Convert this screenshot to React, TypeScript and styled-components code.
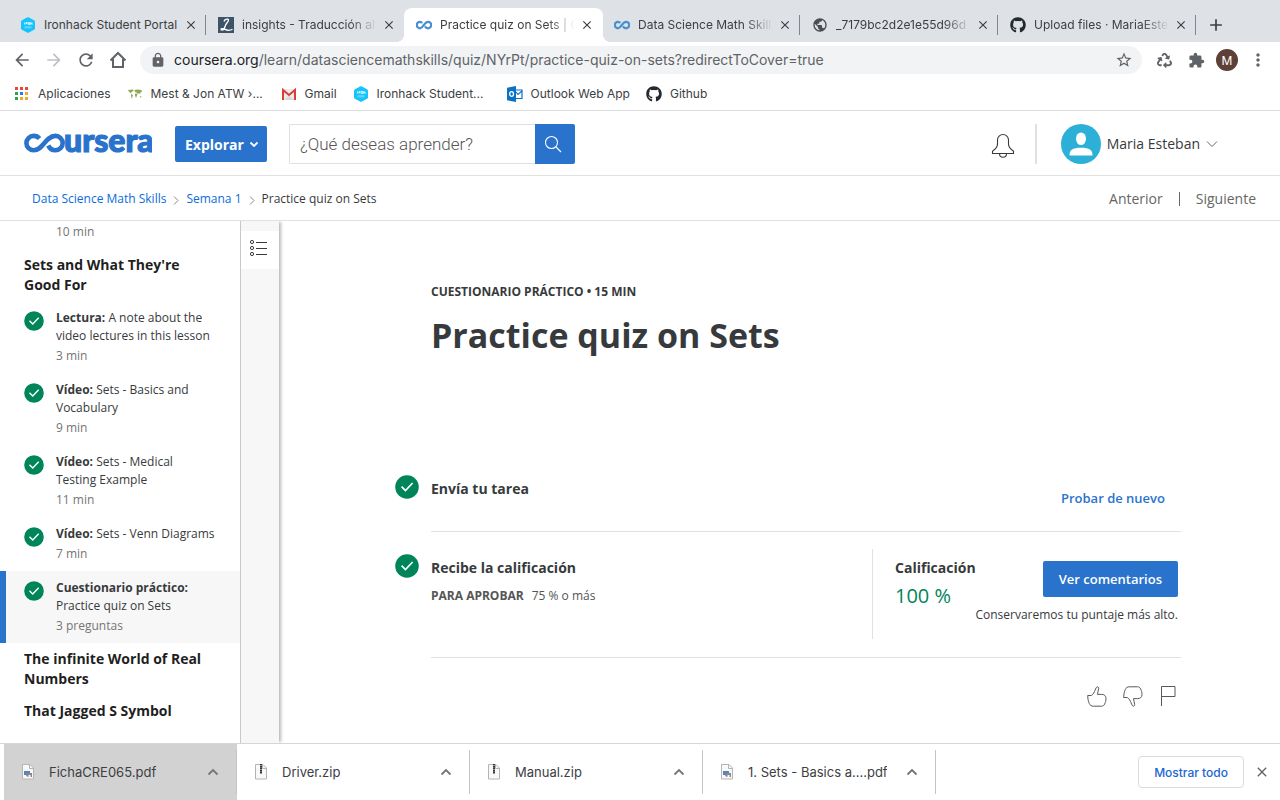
import React from "react";
import styled, { createGlobalStyle, css } from "styled-components";
import { FaGithub, FaRecycle } from "react-icons/fa";
import {
  MdAdd,
  MdArrowBack,
  MdArrowForward,
  MdClose,
  MdExtension,
  MdLock,
  MdMoreVert,
  MdPublic,
  MdRefresh,
  MdStarBorder,
} from "react-icons/md";

const GlobalStyle = createGlobalStyle`
  *, *::before, *::after { box-sizing: border-box; }
  body { margin: 0; background: #fff; font-family: "Open Sans", "Noto Sans", sans-serif; color: #373a3c; }
  button, input { font-family: inherit; }
  a { text-decoration: none; color: inherit; }
  h1, h2, h3, p, ul { margin: 0; padding: 0; }
  ul { list-style: none; }
  svg { display: block; flex: none; }
`;

const ui = css`
  font-family: Inter, Roboto, sans-serif;
`;

const Window = styled.div`
  display: flex;
  flex-direction: column;
  height: 100vh;
  min-height: 600px;
  overflow: hidden;
`;

/* ---------- browser chrome ---------- */

const TabStrip = styled.div`
  ${ui}
  display: flex;
  align-items: stretch;
  height: 42px;
  flex: none;
  padding: 8px 8px 0;
  background: #dee1e6;
`;

const Tab = styled.div<{ $active?: boolean; $line?: boolean }>`
  position: relative;
  display: flex;
  align-items: center;
  gap: 8px;
  flex: 0 1 198px;
  min-width: 0;
  padding: 0 7px 0 12px;
  font-size: 12px;
  line-height: 16px;
  color: #3c4043;
  ${(p) => p.$line && css`
    &::after {
      content: "";
      position: absolute;
      right: 0;
      top: 7px;
      width: 1px;
      height: 20px;
      background: #80868b;
    }
  `}
  ${(p) => p.$active && css`
    z-index: 1;
    &::before {
      content: "";
      position: absolute;
      z-index: -1;
      inset: 0 -1px 0 0;
      border-radius: 8px 8px 0 0;
      background: #fff;
    }
    &::after {
      content: "";
      position: absolute;
      z-index: -1;
      bottom: 0;
      left: -8px;
      right: -9px;
      height: 8px;
      background:
        radial-gradient(circle at 0 0, transparent 8px, #fff 8px) left / 8px 8px no-repeat,
        radial-gradient(circle at 100% 0, transparent 8px, #fff 8px) right / 8px 8px no-repeat;
    }
  `}
`;

const TabTitle = styled.span<{ $fade?: boolean }>`
  flex: 1;
  min-width: 0;
  margin-right: -4px;
  overflow: hidden;
  white-space: nowrap;
  ${(p) => p.$fade && css`
    mask-image: linear-gradient(to right, #000 80%, transparent);
  `}
`;

const IconButton = styled.button<{ $size?: number; $color?: string }>`
  display: flex;
  align-items: center;
  justify-content: center;
  flex: none;
  width: ${(p) => p.$size ?? 24}px;
  height: ${(p) => p.$size ?? 24}px;
  padding: 0;
  border: 0;
  background: none;
  color: ${(p) => p.$color ?? "#5f6368"};
`;

const NewTab = styled(IconButton)`
  align-self: center;
  margin-left: 8px;
`;

const Toolbar = styled.div`
  ${ui}
  display: flex;
  align-items: center;
  gap: 8px;
  flex: none;
  height: 36px;
  padding: 0 10px;
`;

const AddressBar = styled.div`
  display: flex;
  align-items: center;
  gap: 8px;
  flex: 1;
  min-width: 0;
  height: 28px;
  margin: 0 2px;
  padding: 0 6px 0 10px;
  border-radius: 14px;
  background: #f1f3f4;
  color: #5f6368;
`;

const Address = styled.span`
  flex: 1;
  overflow: hidden;
  white-space: nowrap;
  font-size: 14px;
  line-height: 20px;
  b { font-weight: 400; color: #202124; }
`;

const Profile = styled.button`
  width: 22px;
  height: 22px;
  padding: 0;
  border: 0;
  border-radius: 50%;
  background: #5d4037;
  color: #fff;
  font-size: 12px;
`;

const Bookmarks = styled.nav`
  ${ui}
  display: flex;
  align-items: center;
  gap: 16px;
  flex: none;
  height: 33px;
  padding: 0 14px;
  border-bottom: 1px solid #dadce0;
`;

const Bookmark = styled.a<{ $long?: boolean }>`
  display: flex;
  align-items: center;
  gap: 8px;
  width: ${(p) => (p.$long ? "138px" : "auto")};
  font-size: 12px;
  line-height: 16px;
  color: #3c4043;
  white-space: nowrap;
`;

/* ---------- coursera header ---------- */

const Header = styled.header`
  display: flex;
  align-items: center;
  flex: none;
  height: 65px;
  padding: 2px 24px 0;
  border-bottom: 1px solid #e1e1e1;
`;

const Explore = styled.button`
  display: flex;
  align-items: center;
  gap: 5px;
  height: 36px;
  margin: 0 22px 0 23px;
  padding: 0 8px 0 10px;
  border: 0;
  border-radius: 2px;
  background: #2a73cc;
  color: #fff;
  font-size: 14px;
  font-weight: 700;
`;

const Search = styled.form`
  display: flex;
  width: 286px;
  height: 40px;
`;

const SearchInput = styled.input`
  flex: 1;
  min-width: 0;
  padding: 0 10px;
  border: 1px solid #e1e1e1;
  border-right: 0;
  border-radius: 2px 0 0 2px;
  font-family: Roboto, sans-serif;
  font-size: 17px;
  font-weight: 300;
  &::placeholder { color: #555; opacity: 1; }
`;

const SearchButton = styled.button`
  display: flex;
  align-items: center;
  justify-content: center;
  width: 40px;
  padding: 0 4px 0 0;
  border: 0;
  border-radius: 0 2px 2px 0;
  background: #2a73cc;
`;

const HeaderRight = styled.div`
  display: flex;
  align-items: center;
  margin-left: auto;
  padding-right: 38px;
`;

const BellButton = styled(IconButton)`
  padding-top: 4px;
`;

const Divider = styled.span`
  width: 2px;
  height: 40px;
  margin: 0 24px 0 20px;
  background: #e1e1e1;
`;

const Account = styled.button`
  display: flex;
  align-items: center;
  gap: 6px;
  padding: 0;
  border: 0;
  background: none;
  color: #373a3c;
  font-size: 14px;
  line-height: 18px;
`;

const Crumbs = styled.nav`
  display: flex;
  align-items: center;
  flex: none;
  height: 45px;
  padding: 2px 24px 0 32px;
  border-bottom: 1px solid #e1e1e1;
  font-size: 12px;
  line-height: 18px;
`;

const Crumb = styled.a`
  color: #0a6cdc;
`;

const CrumbArrow = styled.svg`
  margin: 2px 7px 0;
`;

const Pager = styled.div`
  display: flex;
  align-items: center;
  gap: 16px;
  margin-left: auto;
  color: #666;
  font-size: 14px;
`;

const PagerLine = styled.span`
  width: 1px;
  height: 14px;
  background: #666;
`;

/* ---------- page body ---------- */

const Body = styled.div`
  display: flex;
  flex: 1;
  min-height: 0;
  overflow: hidden;
`;

const Sidebar = styled.aside`
  flex: none;
  width: 241px;
  padding-top: 2px;
  border-right: 1px solid #c8c8c8;
  overflow: hidden;
`;

const SectionTitle = styled.h3`
  padding: 6px 24px;
  color: #1f1f1f;
  font-size: 14px;
  line-height: 20px;
  font-weight: 700;
`;

const Lesson = styled.a<{ $active?: boolean }>`
  display: flex;
  gap: 12px;
  padding: 8px 24px 8px ${(p) => (p.$active ? 18 : 24)}px;
  border-left: ${(p) => (p.$active ? "6px solid #2a73cc" : "0")};
  background: ${(p) => (p.$active ? "#f7f7f7" : "none")};
  font-size: 12px;
  line-height: 18px;
  svg { margin-top: 2px; }
`;

const LessonMeta = styled.p`
  margin-top: 2px;
  color: #757575;
`;

const PreviousMeta = styled.p`
  padding: 0 24px 8px 56px;
  font-size: 12px;
  line-height: 18px;
  color: #757575;
`;

const Rail = styled.div`
  flex: none;
  width: 38px;
  padding-top: 10px;
  background: #f7f7f7;
  box-shadow: 3px 0 3px -1px rgba(0, 0, 0, 0.28);
`;

const RailButton = styled.button`
  display: flex;
  align-items: center;
  width: 100%;
  height: 38px;
  padding: 0 0 4px 8px;
  border: 0;
  background: #fff;
`;

const Main = styled.main`
  flex: 1;
  min-width: 0;
  padding: 62px 0 0 17px;
  overflow: hidden;
`;

const Content = styled.div`
  max-width: 786px;
  margin: 0 auto;
`;

const TitleBlock = styled.div`
  min-height: 170px;
  padding-left: 36px;
`;

const Kicker = styled.p`
  font-size: 12px;
  line-height: 18px;
  font-weight: 700;
`;

const Title = styled.h1`
  margin-top: 10px;
  font-size: 34px;
  line-height: 48px;
  font-weight: 700;
`;

const Step = styled.section`
  display: flex;
  gap: 12px;
  & > svg { margin-top: 22px; }
`;

const StepBody = styled.div<{ $tall?: boolean }>`
  display: flex;
  flex: 1;
  min-height: ${(p) => (p.$tall ? 126 : 79)}px;
  border-bottom: 1px solid #e1e1e1;
`;

const StepText = styled.div`
  flex: 1;
  padding-top: 26px;
`;

const StepTitle = styled.h2`
  font-size: 14px;
  line-height: 20px;
  font-weight: 700;
`;

const PassLine = styled.p`
  display: flex;
  gap: 8px;
  margin-top: 9px;
  font-size: 12px;
  line-height: 18px;
  color: #555;
`;

const Grade = styled.div`
  display: flex;
  width: 309px;
  margin: 17px 0 18px;
  padding: 9px 3px 0 22px;
  border-left: 1px solid #e1e1e1;
`;

const GradeValue = styled.p`
  margin-top: 4px;
  color: #00855a;
  font-size: 20px;
  line-height: 28px;
`;

const GradeAction = styled.div`
  display: flex;
  flex: 1;
  flex-direction: column;
  align-items: flex-end;
  margin-top: 3px;
`;

const Note = styled.p`
  display: flex;
  justify-content: flex-end;
  width: 0;
  margin-top: 9px;
  font-size: 12px;
  line-height: 18px;
  white-space: nowrap;
`;

const Primary = styled.button`
  flex: none;
  height: 36px;
  padding: 0 16px;
  border: 0;
  border-radius: 2px;
  background: #2a73cc;
  color: #fff;
  font-size: 13px;
  font-weight: 600;
  white-space: nowrap;
`;

const TextButton = styled(Primary)`
  margin-top: 27px;
  background: none;
  color: #2a73cc;
`;

const Feedback = styled.div`
  display: flex;
  justify-content: flex-end;
  gap: 16px;
  padding: 27px 4px 0 0;
`;

const FeedbackButton = styled(IconButton)<{ $narrow?: boolean }>`
  width: ${(p) => (p.$narrow ? 18 : 20)}px;
  height: 22px;
`;

/* ---------- downloads ---------- */

const Downloads = styled.footer`
  ${ui}
  display: flex;
  align-items: stretch;
  flex: none;
  height: 57px;
  padding-left: 4px;
  border-top: 1px solid #d6d6d6;
  background: #fff;
`;

const Download = styled.div<{ $pressed?: boolean }>`
  position: relative;
  display: flex;
  align-items: center;
  gap: 13px;
  flex: 0 1 233px;
  min-width: 0;
  padding: 0 12px 0 16px;
  background: ${(p) => (p.$pressed ? "#d2d2d2" : "none")};
  color: #3c4043;
  font-size: 13px;
  &::after {
    content: "";
    position: absolute;
    right: 0;
    top: 6px;
    bottom: 6px;
    width: 1px;
    background: #c4c4c4;
  }
`;

const FileName = styled.span`
  flex: 1;
  overflow: hidden;
  white-space: nowrap;
`;

const ShowAll = styled.button`
  align-self: center;
  height: 32px;
  margin-left: auto;
  padding: 0 15px;
  border: 1px solid #dadce0;
  border-radius: 4px;
  background: #fff;
  color: #1a66d2;
  font-size: 12px;
  font-weight: 500;
`;

const CloseBar = styled(IconButton)`
  align-self: center;
  margin: 0 6px;
`;

/* ---------- drawings ---------- */

const HexLogo = () => (
  <svg width="16" height="16" viewBox="0 0 16 16">
    <path d="M7 .4Q8-.1 9 .4l5 2.8q1 .6 1 1.6v6.4q0 1-1 1.6l-5 2.8q-1 .5-2 0l-5-2.8q-1-.6-1-1.6V4.800q0-1 1-1.600z" fill="#16c3fb" />
    <path d="M4.500 5.500v2M6 7.500v-2h1.200v1H6M8.300 5.500h1.400v2H8.300zM10.700 7.500v-2l1.300 2v-2" stroke="#fff" strokeWidth=".8" fill="none" />
    <path d="M4.500 9.800h7M4.500 10.800h7" stroke="#fff" strokeWidth=".5" opacity=".7" />
  </svg>
);

const Infinity = () => (
  <svg width="16" height="16" viewBox="0 0 32 32">
    <path
      d="M12.500 12C11 10 9.500 9.500 8 9.500a6.500 6.500 0 0 0 0 13c7 0 8-13 16-13a6.500 6.500 0 0 1 0 13c-3 0-5-2-6-4"
      fill="none"
      stroke="#4a90d0"
      strokeWidth="4.500"
    />
  </svg>
);

const Linguee = () => (
  <svg width="16" height="16" viewBox="0 0 16 16">
    <path d="M0 0h16v16H0z" fill="#3d5468" />
    <path
      d="M6 4.500C6.500 2.200 10.500 1.200 10.500 3 10.500 5 7.500 6.500 7 9.500c-.4 2-1.500 3.500-3 3.500-1.300 0-1.300-1.300 0-1.300 2 0 4 1.600 6.500 1.600 2 0 3-.4 4-1"
      fill="none"
      stroke="#fff"
      strokeWidth="1.300"
    />
  </svg>
);

const appColors = ["#e8453c", "#e8453c", "#e8453c", "#2ba24c", "#2a7de9", "#f4a62a", "#2ba24c", "#f4a62a", "#f4a62a"];
const AppsIcon = () => (
  <svg width="16" height="16" viewBox="0 0 16 16">
    {appColors.map((c, i) => (
      <rect key={i} x={1 + (i % 3) * 5} y={1 + Math.floor(i / 3) * 5} width="3" height="3" fill={c} />
    ))}
  </svg>
);

const MapIcon = () => (
  <svg width="16" height="16" viewBox="0 0 16 16" fill="#8caa58">
    <path d="M1 4l5-.5.500 1.500-2 1-.500 1.500-1-1L1.500 5zM4 8l2 1-.500 1.500L5 13l-1-3zM7.500 4L10 3.500l4.500.5.500 1.500-1.500 1-.500 2-1-1.500-1.500 1-1-1.500-1.500-.5zM8 7.500l2.500.500-.500 1.500L9 12 8 9.500zM12.500 10l2 .5-.5 1.500z" />
  </svg>
);

const GmailIcon = () => (
  <svg width="16" height="16" viewBox="0 0 16 16">
    <path d="M1 3h14v11H1z" fill="#ececec" />
    <path d="M3 14l5-4.500L13 14z" fill="#d8d8d8" />
    <path d="M2 14V4l6 5 6-5v10" fill="none" stroke="#d93f35" strokeWidth="2" />
  </svg>
);

const OutlookIcon = () => (
  <svg width="16" height="16" viewBox="0 0 16 16">
    <path d="M8.500 4H15v8.500H8.500" fill="#fff" stroke="#0a72c6" strokeWidth="1.200" />
    <path d="M9 6l2 2.500L15 5" fill="none" stroke="#0a72c6" strokeWidth="1.200" />
    <path d="M0 1.800L9 0v16l-9-1.800z" fill="#0a72c6" />
    <ellipse cx="4.600" cy="8" rx="1.900" ry="2.400" fill="none" stroke="#fff" strokeWidth="1.300" />
  </svg>
);

const HomeIcon = () => (
  <svg width="18" height="18" viewBox="0 0 18 18">
    <path d="M1.500 9.500L9 2l7.500 7.500M4 8v8h10V8" fill="none" stroke="#5f6368" strokeWidth="2" />
  </svg>
);

const CourseraLogo = () => (
  <svg width="128" height="26" viewBox="0 0 128 26" role="img" aria-label="coursera">
    <path
      d="M15.500 7.500C14 5.800 12 4.900 9.600 4.900a7.200 7.200 0 0 0 0 14.400C19.500 19.300 21 4.900 31.500 4.900a7.200 7.200 0 0 1 0 14.400c-3.600 0-6-2-7.200-4.800"
      fill="none"
      stroke="#2a73cc"
      strokeWidth="4.600"
    />
    <text x="40" y="21" fill="#2a73cc" stroke="#2a73cc" strokeWidth="1.200" fontFamily="Lato, sans-serif" fontWeight="900" fontSize="32">
      ursera
    </text>
  </svg>
);

const Chevron = ({ color = "#fff", wide = false }: { color?: string; wide?: boolean }) => (
  <svg width={wide ? 12 : 10} height="8" viewBox={wide ? "0 0 12 8" : "0 0 10 8"}>
    <path d={wide ? "M1 1.500l5 5 5-5" : "M1.500 2.500l3.500 3.500 3.500-3.500"} fill="none" stroke={color} strokeWidth={wide ? 1 : 1.800} />
  </svg>
);

const UpChevron = () => (
  <svg width="12" height="8" viewBox="0 0 12 8">
    <path d="M1.500 6.500L6 2l4.500 4.500" fill="none" stroke="#757575" strokeWidth="1.800" />
  </svg>
);

const Check = ({ size = 20 }: { size?: number }) => (
  <svg width={size} height={size} viewBox="0 0 20 20">
    <circle cx="10" cy="10" r="9.800" fill="#00855a" />
    <path d="M5.500 9.700l3.200 3.200 6-6.200" fill="none" stroke="#fff" strokeWidth="1.400" />
  </svg>
);

const Bell = () => (
  <svg width="24" height="26" viewBox="0 0 24 26" fill="none" stroke="#373a3c" strokeWidth="1.100">
    <path d="M1.500 20.500v-2.300c3.500-2.400 5-4.200 5-7.200V7a5.500 5.500 0 0 1 11 0v4c0 3 1.500 4.800 5 7.200v2.300z" />
    <path d="M8.500 20.500c0 5 7 5 7 0" />
  </svg>
);

const Avatar = () => (
  <svg width="40" height="40" viewBox="0 0 40 40">
    <circle cx="20" cy="20" r="20" fill="#2cb0d7" />
    <ellipse cx="20" cy="14.700" rx="5" ry="6.300" fill="#fff" />
    <path d="M8.500 31.500c0-6 3-7.800 11.500-7.800s11.500 1.800 11.500 7.800z" fill="#fff" />
  </svg>
);

const ListIcon = () => (
  <svg width="18" height="18" viewBox="0 0 18 18" fill="none" stroke="#373a3c" strokeWidth="1">
    {[3, 9, 15].map((y) => (
      <g key={y}>
        <circle cx="3" cy={y} r="1.600" />
        <path d={`M7 ${y + 0.5}h11`} />
      </g>
    ))}
  </svg>
);

const thumb =
  "M.700 9.500h3.600C6.500 8.300 7.300 6 8 4.300l1.300-2.800C10 .3 11.800.8 11.700 2.500c-.1 1.800-1.200 3.600-1.200 5.900h4.200c2.400 0 4.300 1.300 4.300 4 0 2.500-.6 4-1.300 5.500-.7 1.600-1.600 2.300-3.200 2.300H6.300c-1.800 0-3.300-.9-4-2.700-.5-1.400-1.100-2.500-1.300-4.200z";
const Thumb = ({ down = false }: { down?: boolean }) => (
  <svg width="20" height="21" viewBox="0 0 20 21">
    <path d={thumb} transform={down ? "translate(0 21) scale(1 -1)" : undefined} fill="none" stroke="#555a5e" strokeWidth="1" />
  </svg>
);

const Flag = () => (
  <svg width="16" height="20" viewBox="0 0 16 20">
    <path d="M1.500 20V.500h13.500v10H1.500" fill="none" stroke="#555a5e" strokeWidth="1" />
  </svg>
);

const FileIcon = ({ zip }: { zip?: boolean }) => (
  <svg width="16" height="18" viewBox="0 0 16 18">
    <path d="M2.500 1.500h7.500l3.500 3.500v11h-11z" fill="#f8f8f8" stroke="#b4b4b4" />
    <path d="M9.500 1.500V5.500h4" fill="none" stroke="#b4b4b4" />
    {zip ? (
      <path d="M8 1v10" stroke="#333" strokeWidth="2" strokeDasharray="1.500 .4" />
    ) : (
      <>
        <path d="M4 8h6v4H4z" fill="#5b80bd" />
        <path d="M6 13l1-3h5v4h-1.500v-2h-2v2z" fill="#85888c" />
      </>
    )}
  </svg>
);

/* ---------- data ---------- */

const tabs = [
  { title: "Ironhack Student Portal", icon: <HexLogo />, line: true },
  { title: "insights - Traducción al", icon: <Linguee />, fade: true },
  { title: "Practice quiz on Sets | C", icon: <Infinity />, fade: true, active: true },
  { title: "Data Science Math Skill", icon: <Infinity />, fade: true, line: true },
  { title: "_7179bc2d2e1e55d96d", icon: <MdPublic size={16} color="#4a4d51" />, fade: true, line: true },
  { title: "Upload files · MariaEste", icon: <FaGithub size={16} color="#24292e" />, fade: true, line: true },
];

const bookmarks = [
  { label: "Aplicaciones", icon: <AppsIcon /> },
  { label: "Mest & Jon ATW ›...", icon: <MapIcon />, long: true },
  { label: "Gmail", icon: <GmailIcon /> },
  { label: "Ironhack Student...", icon: <HexLogo />, long: true },
  { label: "Outlook Web App", icon: <OutlookIcon /> },
  { label: "Github", icon: <FaGithub size={16} color="#24292e" /> },
];

const lessons = [
  { kind: "Lectura:", name: "A note about the video lectures in this lesson", meta: "3 min" },
  { kind: "Vídeo:", name: "Sets - Basics and Vocabulary", meta: "9 min" },
  { kind: "Vídeo:", name: "Sets - Medical Testing Example", meta: "11 min" },
  { kind: "Vídeo:", name: "Sets - Venn Diagrams", meta: "7 min" },
  { kind: "Cuestionario práctico:", name: "Practice quiz on Sets", meta: "3 preguntas", active: true },
];

const files = [
  { name: "FichaCRE065.pdf", pressed: true },
  { name: "Driver.zip", zip: true },
  { name: "Manual.zip", zip: true },
  { name: "1. Sets - Basics a....pdf" },
];

export default function App() {
  return (
    <Window>
      <GlobalStyle />
      <TabStrip>
        {tabs.map((t) => (
          <Tab key={t.title} $active={t.active} $line={t.line}>
            {t.icon}
            <TabTitle $fade={t.fade}>{t.title}</TabTitle>
            <IconButton $size={16} $color="#3c4043" aria-label="Cerrar pestaña"><MdClose size={14} /></IconButton>
          </Tab>
        ))}
        <NewTab $color="#3c4043" aria-label="Nueva pestaña"><MdAdd size={20} /></NewTab>
      </TabStrip>

      <Toolbar>
        <IconButton aria-label="Atrás"><MdArrowBack size={20} /></IconButton>
        <IconButton $color="#bdc1c6" aria-label="Adelante"><MdArrowForward size={20} /></IconButton>
        <IconButton aria-label="Recargar"><MdRefresh size={20} /></IconButton>
        <IconButton aria-label="Inicio"><HomeIcon /></IconButton>
        <AddressBar>
          <MdLock size={16} />
          <Address>
            <b>coursera.org</b>/learn/datasciencemathskills/quiz/NYrPt/practice-quiz-on-sets?redirectToCover=true
          </Address>
          <IconButton aria-label="Favorito"><MdStarBorder size={18} /></IconButton>
        </AddressBar>
        <IconButton aria-label="Reciclar"><FaRecycle size={15} /></IconButton>
        <IconButton aria-label="Extensiones"><MdExtension size={17} /></IconButton>
        <Profile aria-label="Perfil">M</Profile>
        <IconButton aria-label="Menú"><MdMoreVert size={20} /></IconButton>
      </Toolbar>

      <Bookmarks>
        {bookmarks.map((b) => (
          <Bookmark key={b.label} href="#" $long={b.long}>{b.icon}{b.label}</Bookmark>
        ))}
      </Bookmarks>

      <Header>
        <CourseraLogo />
        <Explore>Explorar <Chevron /></Explore>
        <Search>
          <SearchInput type="text" aria-label="Buscar" placeholder="¿Qué deseas aprender?" />
          <SearchButton type="button" aria-label="Buscar">
            <svg width="18" height="18" viewBox="0 0 18 18" fill="none" stroke="#fff" strokeWidth="1.100">
              <circle cx="7.500" cy="7.500" r="6" />
              <path d="M12 12l5 5" />
            </svg>
          </SearchButton>
        </Search>
        <HeaderRight>
          <BellButton aria-label="Notificaciones"><Bell /></BellButton>
          <Divider />
          <Account><Avatar />Maria Esteban <Chevron wide color="#666" /></Account>
        </HeaderRight>
      </Header>

      <Crumbs>
        <Crumb href="#">Data Science Math Skills</Crumb>
        <CrumbArrow width="6" height="9" viewBox="0 0 6 9"><path d="M1 .5l4 4-4 4" fill="none" stroke="#888" /></CrumbArrow>
        <Crumb href="#">Semana 1</Crumb>
        <CrumbArrow width="6" height="9" viewBox="0 0 6 9"><path d="M1 .5l4 4-4 4" fill="none" stroke="#888" /></CrumbArrow>
        <span>Practice quiz on Sets</span>
        <Pager>
          <a href="#">Anterior</a>
          <PagerLine />
          <a href="#">Siguiente</a>
        </Pager>
      </Crumbs>

      <Body>
        <Sidebar>
          <PreviousMeta>10 min</PreviousMeta>
          <SectionTitle>Sets and What They're Good For</SectionTitle>
          {lessons.map((l) => (
            <Lesson key={l.name} href="#" $active={l.active}>
              <Check />
              <div>
                <p><b>{l.kind}</b> {l.name}</p>
                <LessonMeta>{l.meta}</LessonMeta>
              </div>
            </Lesson>
          ))}
          <SectionTitle>The infinite World of Real Numbers</SectionTitle>
          <SectionTitle>That Jagged S Symbol</SectionTitle>
        </Sidebar>
        <Rail>
          <RailButton aria-label="Lista de lecciones"><ListIcon /></RailButton>
        </Rail>
        <Main>
          <Content>
            <TitleBlock>
              <Kicker>CUESTIONARIO PRÁCTICO • 15 MIN</Kicker>
              <Title>Practice quiz on Sets</Title>
            </TitleBlock>
            <Step>
              <Check size={24} />
              <StepBody>
                <StepText><StepTitle>Envía tu tarea</StepTitle></StepText>
                <TextButton>Probar de nuevo</TextButton>
              </StepBody>
            </Step>
            <Step>
              <Check size={24} />
              <StepBody $tall>
                <StepText>
                  <StepTitle>Recibe la calificación</StepTitle>
                  <PassLine><b>PARA APROBAR</b><span>75 % o más</span></PassLine>
                </StepText>
                <Grade>
                  <div>
                    <StepTitle>Calificación</StepTitle>
                    <GradeValue>100 %</GradeValue>
                  </div>
                  <GradeAction>
                    <Primary>Ver comentarios</Primary>
                    <Note>Conservaremos tu puntaje más alto.</Note>
                  </GradeAction>
                </Grade>
              </StepBody>
            </Step>
            <Feedback>
              <FeedbackButton aria-label="Me gusta"><Thumb /></FeedbackButton>
              <FeedbackButton aria-label="No me gusta"><Thumb down /></FeedbackButton>
              <FeedbackButton $narrow aria-label="Informar"><Flag /></FeedbackButton>
            </Feedback>
          </Content>
        </Main>
      </Body>

      <Downloads>
        {files.map((f) => (
          <Download key={f.name} $pressed={f.pressed}>
            <FileIcon zip={f.zip} />
            <FileName>{f.name}</FileName>
            <IconButton aria-label="Opciones"><UpChevron /></IconButton>
          </Download>
        ))}
        <ShowAll>Mostrar todo</ShowAll>
        <CloseBar aria-label="Cerrar barra"><MdClose size={16} /></CloseBar>
      </Downloads>
    </Window>
  );
}
